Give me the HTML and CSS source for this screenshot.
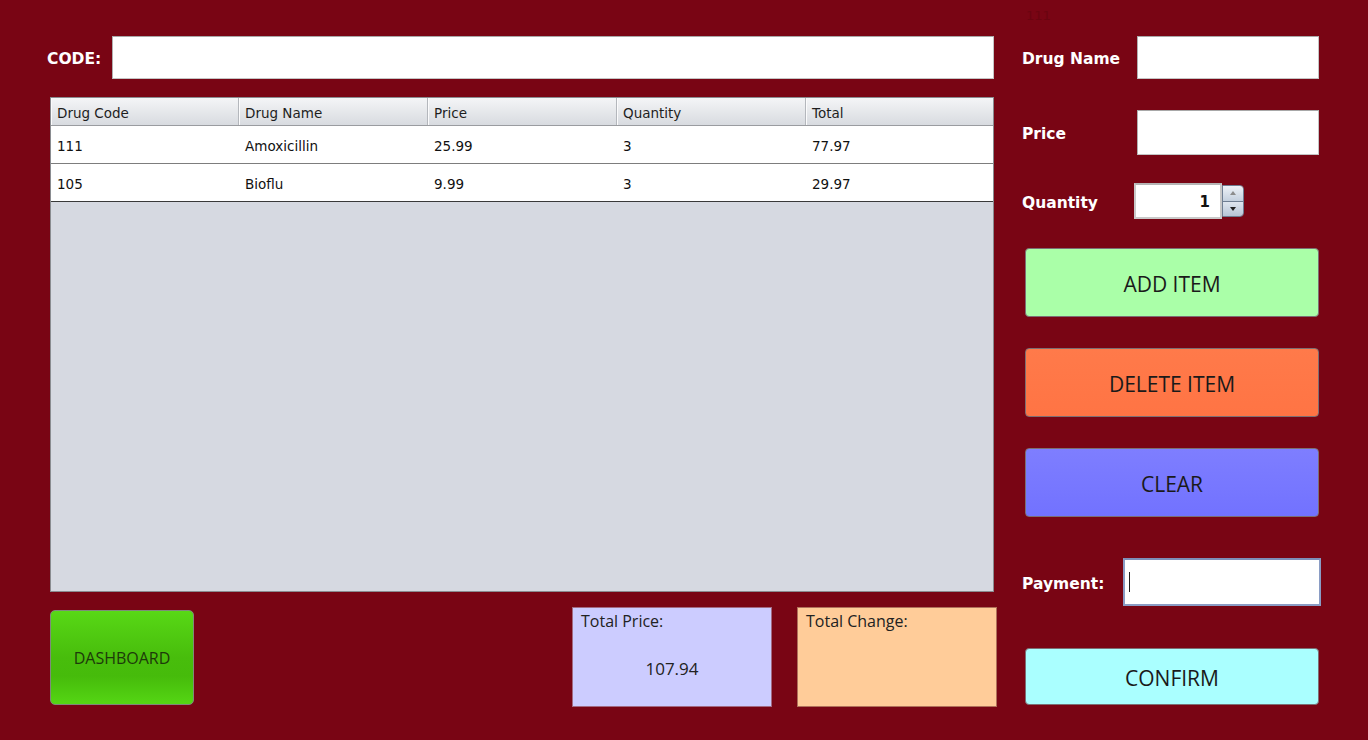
FILE: index.html
```html
<!DOCTYPE html>
<html>
<head>
<meta charset="utf-8">
<title>POS</title>
<link rel="stylesheet" href="styles.css">
</head>
<body>
<div class="app">
  <div class="left">
    <div class="code-row">
      <span class="code-label">CODE:</span>
      <div class="field code-input"></div>
    </div>
    <div class="table">
      <div class="thead">
        <div class="th">Drug Code</div>
        <div class="th">Drug Name</div>
        <div class="th">Price</div>
        <div class="th">Quantity</div>
        <div class="th last">Total</div>
      </div>
      <div class="tr">
        <div class="td">111</div><div class="td">Amoxicillin</div><div class="td">25.99</div><div class="td">3</div><div class="td">77.97</div>
      </div>
      <div class="tr dark">
        <div class="td">105</div><div class="td">Bioflu</div><div class="td">9.99</div><div class="td">3</div><div class="td">29.97</div>
      </div>
    </div>
    <div class="bottom-row">
      <div class="dash">DASHBOARD</div>
      <div class="box total-price">
        <div class="box-label">Total Price:</div>
        <div class="box-value">107.94</div>
      </div>
      <div class="box total-change">
        <div class="box-label">Total Change:</div>
      </div>
    </div>
  </div>
  <div class="right">
    <div class="ghost">111</div>
    <div class="frow row-name">
      <span class="flabel w-name">Drug Name</span>
      <div class="field rinput"></div>
    </div>
    <div class="frow row-price">
      <span class="flabel w-name">Price</span>
      <div class="field rinput"></div>
    </div>
    <div class="frow row-qty">
      <span class="flabel w-qty">Quantity</span>
      <div class="spinner">
        <div class="spin-field">1</div>
        <div class="spin-btns">
          <div class="spin-up"><span class="tri-up"></span></div>
          <div class="spin-down"><span class="tri-down"></span></div>
        </div>
      </div>
    </div>
    <div class="btn btn-add">ADD ITEM</div>
    <div class="btn btn-del">DELETE ITEM</div>
    <div class="btn btn-clear">CLEAR</div>
    <div class="frow row-pay">
      <span class="flabel w-pay">Payment:</span>
      <div class="pay-input"><span class="caret"></span></div>
    </div>
    <div class="btn btn-confirm">CONFIRM</div>
  </div>
</div>
</body>
</html>
```

FILE: styles.css
```css
html, body {
  margin: 0;
  padding: 0;
}
body {
  width: 1368px;
  height: 740px;
  overflow: hidden;
  background: #790514;
  font-family: "DejaVu Sans", "Liberation Sans", sans-serif;
}
.app {
  display: flex;
  padding-left: 47px;
}
.left {
  width: 950px;
  padding-top: 36px;
  display: flex;
  flex-direction: column;
}
.code-row {
  display: flex;
  align-items: center;
  height: 43px;
}
.code-label {
  width: 65px;
  padding-top: 3px;
  color: #fff;
  font-weight: bold;
  font-size: 15.5px;
}
.field {
  box-sizing: border-box;
  background: #fff;
  border: 1px solid #c4c4c4;
  border-top-color: #a8a8a8;
  border-left-color: #b0b0b0;
}
.code-input {
  width: 882px;
  height: 43px;
}
.table {
  margin: 18px 0 0 3px;
  width: 944px;
  height: 495px;
  box-sizing: border-box;
  border: 1px solid #8a8c90;
  background: #d6d9e1;
}
.thead {
  display: grid;
  grid-template-columns: 188px 189px 189px 189px 187px;
  height: 28px;
  box-sizing: border-box;
  border-bottom: 1px solid #9a9ca0;
  background: linear-gradient(#f4f5f7, #e6e8eb 50%, #d8dbe0);
}
.th {
  display: flex;
  align-items: center;
  padding: 2px 0 0 6px;
  font-size: 13.5px;
  color: #1e1e1e;
  border-right: 1px solid #b4b7bc;
  box-shadow: inset 1px 0 0 #fbfbfc;
}
.th.last {
  border-right: none;
}
.tr {
  display: grid;
  grid-template-columns: 188px 189px 189px 189px 187px;
  height: 38px;
  box-sizing: border-box;
  background: #fff;
  border-bottom: 1px solid #7d7d7d;
}
.tr.dark {
  border-bottom-color: #3a3a3a;
}
.td {
  display: flex;
  align-items: center;
  padding: 3px 0 0 6px;
  font-size: 13.5px;
  color: #111;
}
.bottom-row {
  display: flex;
  align-items: flex-start;
  margin: 15px 0 0 3px;
}
.dash {
  margin-top: 3px;
  width: 144px;
  height: 95px;
  box-sizing: border-box;
  border: 1px solid #7f8a7a;
  border-radius: 5px;
  background: linear-gradient(#58d816, #48bd0c 50%, #46bb0b 70%, #55d614);
  display: flex;
  align-items: center;
  justify-content: center;
  font-family: "Open Sans", sans-serif;
  font-size: 16px;
  color: #1d3a0a;
}
.box {
  width: 200px;
  height: 100px;
  box-sizing: border-box;
  border: 1px solid #a26a82;
  font-family: "Open Sans", sans-serif;
  color: #222;
  display: flex;
  flex-direction: column;
}
.total-price {
  margin-left: 378px;
  background: #ccccff;
}
.total-change {
  margin-left: 25px;
  background: #ffcc99;
  border-color: #b0705a;
}
.box-label {
  padding: 2px 0 0 8px;
  font-size: 16px;
}
.box-value {
  margin-top: 25px;
  text-align: center;
  font-size: 17px;
}
.right {
  padding-left: 25px;
  width: 300px;
  display: flex;
  flex-direction: column;
}
.ghost {
  height: 36px;
  box-sizing: border-box;
  padding: 8px 0 0 4px;
  font-size: 13px;
  color: #6a0410;
}
.frow {
  display: flex;
  align-items: center;
}
.flabel {
  padding-top: 3px;
  color: #fff;
  font-weight: bold;
  font-size: 15.5px;
}
.w-name {
  width: 115px;
}
.w-qty {
  width: 112px;
}
.w-pay {
  width: 101px;
}
.row-name {
  height: 43px;
}
.rinput {
  width: 182px;
  height: 100%;
}
.row-price {
  height: 45px;
  margin-top: 31px;
}
.row-qty {
  height: 36px;
  margin-top: 28px;
}
.spinner {
  display: flex;
  height: 36px;
}
.spin-field {
  width: 88px;
  height: 36px;
  box-sizing: border-box;
  background: #fff;
  border: 2px solid #c9c9c9;
  border-top-color: #b5b5b5;
  text-align: right;
  padding-right: 10px;
  line-height: 34px;
  font-weight: bold;
  font-size: 15px;
  color: #111;
}
.spin-btns {
  margin-top: 2px;
  width: 22px;
  height: 32px;
  box-sizing: border-box;
  border: 1px solid #6f7e92;
  border-radius: 0 4px 4px 0;
  overflow: hidden;
  display: flex;
  flex-direction: column;
}
.spin-up, .spin-down {
  flex: 1;
  display: flex;
  align-items: center;
  justify-content: center;
  background: linear-gradient(#eef2f7, #c4d0de);
}
.spin-down {
  border-top: 1px solid #6f7e92;
  background: linear-gradient(#dfe6ef, #b7c5d6);
}
.tri-up {
  width: 0;
  height: 0;
  border-left: 3px solid transparent;
  border-right: 3px solid transparent;
  border-bottom: 4px solid #8c8c8c;
}
.tri-down {
  width: 0;
  height: 0;
  border-left: 3px solid transparent;
  border-right: 3px solid transparent;
  border-top: 4px solid #222;
}
.btn {
  margin-left: 3px;
  width: 294px;
  height: 69px;
  box-sizing: border-box;
  border: 1px solid #7d6f74;
  border-radius: 4px;
  display: flex;
  align-items: center;
  justify-content: center;
  padding-top: 2px;
  font-family: "Open Sans", sans-serif;
  font-size: 21px;
  color: #1a1a1a;
}
.btn-add {
  margin-top: 29px;
  background: #aaffa8;
}
.btn-del {
  margin-top: 31px;
  background: linear-gradient(#ff7a4a, #ff7444);
}
.btn-clear {
  margin-top: 31px;
  background: linear-gradient(#7e7eff, #7272ff);
}
.row-pay {
  height: 48px;
  margin-top: 41px;
}
.pay-input {
  width: 198px;
  height: 48px;
  box-sizing: border-box;
  background: #fff;
  border: 2px solid #8a9cc4;
  border-top-color: #7d8fb8;
  display: flex;
  align-items: center;
  padding-left: 4px;
}
.caret {
  width: 1px;
  height: 20px;
  background: #222;
}
.btn-confirm {
  margin-top: 42px;
  height: 57px;
  background: #aaffff;
}
```
